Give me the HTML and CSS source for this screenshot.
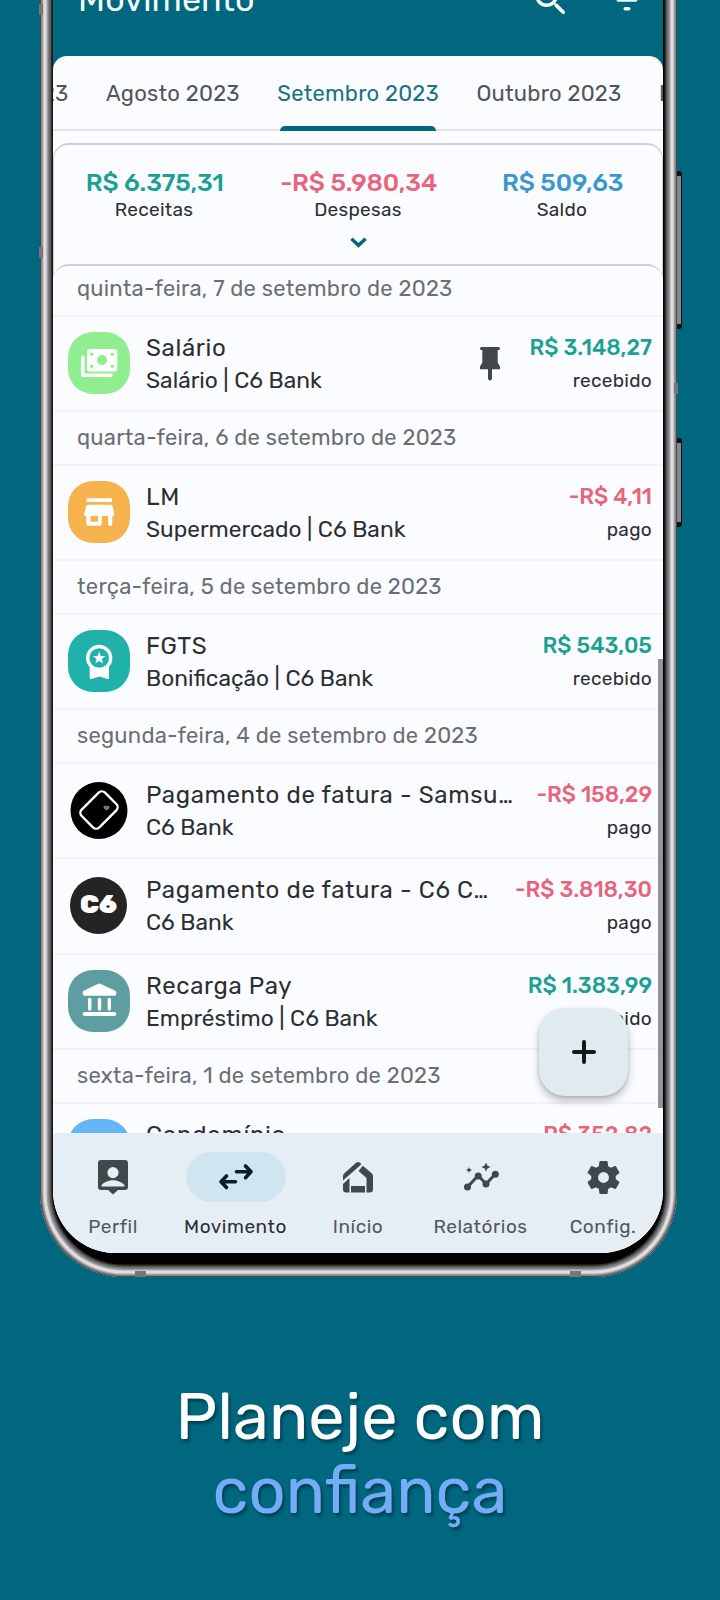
FILE: index.html
```html
<!DOCTYPE html>
<html lang="pt-BR">
<head>
    <meta charset="UTF-8">
    <meta name="viewport" content="width=device-width, initial-scale=1.0">
    <title>Movimento</title>
    <link rel="stylesheet" href="styles.css">
</head>
<body>
    <div class="phone">
        <span class="side-button volume"></span>
        <span class="side-button power"></span>
        <span class="antenna left-top"></span>
        <span class="antenna left-mid"></span>
        <span class="antenna right-mid"></span>
        <span class="antenna bottom-left"></span>
        <span class="antenna bottom-right"></span>
        <div class="screen">
            <header class="app-bar">
                <h1>Movimento</h1>
                <svg class="bar-icon" viewBox="0 0 24 24"><path d="M15.5 14h-.79l-.28-.27A6.47 6.47 0 0 0 16 9.500a6.500 6.500 0 1 0-6.500 6.500c1.610 0 3.090-.59 4.230-1.570l.27.28v.79l4.250 4.250c.41.41 1.080.41 1.490 0s.41-1.080 0-1.490L15.500 14zm-6 0a4.500 4.500 0 1 1 0-9 4.500 4.500 0 0 1 0 9z"/></svg>
                <svg class="bar-icon" viewBox="0 0 24 24"><path d="M4 6h16v2H4zM7 11h10a1 1 0 0 1 0 2H7a1 1 0 0 1 0-2zM11 16h2a1 1 0 0 1 0 2h-2a1 1 0 0 1 0-2z"/></svg>
            </header>
            <nav class="tabs">
                <span class="tab previous">Julho 2023</span>
                <span class="tab">Agosto 2023</span>
                <span class="tab active">Setembro 2023</span>
                <span class="tab">Outubro 2023</span>
                <span class="tab">Novembro 2023</span>
            </nav>
            <section class="summary">
                <div class="totals">
                    <div class="total"><b class="income">R$ 6.375,31</b><span>Receitas</span></div>
                    <div class="total"><b class="expense">-R$ 5.980,34</b><span>Despesas</span></div>
                    <div class="total"><b class="balance">R$ 509,63</b><span>Saldo</span></div>
                </div>
                <svg class="chevron" viewBox="0 0 16 10"><path d="M1.300 1.500 8 7.700l6.700-6.200"/></svg>
            </section>
            <main class="list">
                <h2 class="date first">quinta-feira, 7 de setembro de 2023</h2>
                <div class="entry">
                    <svg class="tile green" viewBox="0 0 62 62">
                        <rect class="fill" x="19" y="17" width="30.300" height="22.600" rx="3"/>
                        <path class="line" d="M14.800 25v18.300h28.200"/>
                        <g class="hole"><circle cx="34" cy="28" r="5"/><circle cx="23.700" cy="22.300" r="1.700"/><circle cx="44.300" cy="22.300" r="1.700"/><circle cx="23.700" cy="34.300" r="1.700"/><circle cx="44.300" cy="34.300" r="1.700"/></g>
                    </svg>
                    <div class="info"><p class="name">Salário</p><p class="sub">Salário | C6 Bank</p></div>
                    <svg class="pin" viewBox="0 0 22 34"><path d="M2.500 0h17a1 1 0 0 1 0 3h-.8v12.500c0 1.500 2.300 2.500 2.300 4.500v2.300H13V32l-2 2-2-2v-9.700H1V20c0-2 2.300-3 2.300-4.500V3h-.8a1 1 0 0 1 0-3z"/></svg>
                    <div class="value"><b class="income">R$ 3.148,27</b><span>recebido</span></div>
                </div>
                <h2 class="date">quarta-feira, 6 de setembro de 2023</h2>
                <div class="entry">
                    <svg class="tile orange" viewBox="0 0 62 62">
                        <rect class="fill" x="18.300" y="17.300" width="26" height="3.700" rx="1.500"/>
                        <path class="fill" fill-rule="evenodd" d="M20 23.700h22.600q1.700 0 2 1.500l1.700 8q.3 1.700-1.300 1.700h-.7v8q0 2-2.200 2-2 0-2-2v-8h-6.400v7.800q0 2-2 2H20.300q-2 0-2-2v-7.800h-.7q-1.600 0-1.300-1.700l1.700-8q.4-1.500 2-1.500zM22.600 35v5.800h7.500V35z"/>
                    </svg>
                    <div class="info"><p class="name">LM</p><p class="sub">Supermercado | C6 Bank</p></div>
                    <div class="value"><b class="expense">-R$ 4,11</b><span>pago</span></div>
                </div>
                <h2 class="date">terça-feira, 5 de setembro de 2023</h2>
                <div class="entry">
                    <svg class="tile teal" viewBox="0 0 62 62">
                        <path class="fill" d="M21.700 36q9.300 6 19.300 0v12q0 1.500-1.500 1L31.300 46.500 23.200 49q-1.500.5-1.500-1z"/>
                        <circle class="hole" cx="31.200" cy="28" r="11"/>
                        <circle class="line" cx="31.200" cy="28" r="11.500"/>
                        <path class="fill" d="m31.200 21.500 1.600 4.500 4.700.1-3.700 2.900 1.300 4.600-3.900-2.700-3.900 2.700 1.300-4.600-3.700-2.900 4.700-.1z"/>
                    </svg>
                    <div class="info"><p class="name">FGTS</p><p class="sub">Bonificação | C6 Bank</p></div>
                    <div class="value"><b class="income">R$ 543,05</b><span>recebido</span></div>
                </div>
                <h2 class="date">segunda-feira, 4 de setembro de 2023</h2>
                <div class="entry">
                    <svg class="tile" viewBox="0 0 62 62">
                        <circle cx="31" cy="31.500" r="28.500"/>
                        <rect class="card" x="18.500" y="14.500" width="25" height="33" rx="4.500" transform="rotate(45 31 31)"/>
                        <path class="heart" d="M38.500 31.500q-4-2.500-2.700-4.500 1.700-1.300 2.900.3 1.700-1.300 2.800.3.600 2-3 3.900z"/>
                    </svg>
                    <div class="info"><p class="name">Pagamento de fatura - Samsung</p><p class="sub">C6 Bank</p></div>
                    <div class="value"><b class="expense">-R$ 158,29</b><span>pago</span></div>
                </div>
                <div class="entry">
                    <div class="tile bank-logo">C6</div>
                    <div class="info"><p class="name">Pagamento de fatura - C6 Carbon</p><p class="sub">C6 Bank</p></div>
                    <div class="value"><b class="expense">-R$ 3.818,30</b><span>pago</span></div>
                </div>
                <div class="entry">
                    <svg class="tile cadet" viewBox="0 0 62 62">
                        <path class="fill" d="M30.300 13.700q1-.6 2 0l15 7q1 .5 1 1.700v1.300q0 2-2 2H16.700q-2 0-2-2v-1.300q0-1.200 1-1.700z"/>
                        <rect class="fill" x="20" y="27.700" width="3.400" height="13" rx="1.700"/>
                        <rect class="fill" x="29.800" y="27.700" width="3.400" height="13" rx="1.700"/>
                        <rect class="fill" x="39.600" y="27.700" width="3.400" height="13" rx="1.700"/>
                        <rect class="fill" x="14.700" y="42" width="33.600" height="4" rx="2"/>
                    </svg>
                    <div class="info"><p class="name">Recarga Pay</p><p class="sub">Empréstimo | C6 Bank</p></div>
                    <div class="value"><b class="income">R$ 1.383,99</b><span>recebido</span></div>
                </div>
                <h2 class="date">sexta-feira, 1 de setembro de 2023</h2>
                <div class="entry">
                    <svg class="tile blue" viewBox="0 0 62 62"></svg>
                    <div class="info"><p class="name">Condomínio</p></div>
                    <div class="value"><b class="expense">R$ 352,82</b></div>
                </div>
            </main>
            <span class="scrollbar"></span>
            <button class="fab"><svg viewBox="0 0 24 24"><path d="M12 2v20M2 12h20"/></svg></button>
            <nav class="bottom-nav">
                <div class="nav-item">
                    <span class="nav-icon"><svg viewBox="0 0 36 36"><path fill-rule="evenodd" d="M6 1h24q3 0 3 3v24q0 3-3 3h-7l-5 4.500-5-4.500H6q-3 0-3-3V4q0-3 3-3zm12 7a5.600 5.600 0 1 0 0 11.200A5.600 5.600 0 0 0 18 8zM6.500 27.500h23v-1.200C27 23 21.500 21.300 18 21.300S9 23 6.500 26.300z"/></svg></span>
                    <span>Perfil</span>
                </div>
                <div class="nav-item active">
                    <span class="nav-icon"><svg viewBox="0 0 36 36"><path class="arrow" d="M18.500 12.800h14.500M27.500 7l5.500 5.800-5.500 5.900M17.500 22.700H3M8.500 17 3 22.700l5.500 5.800"/></svg></span>
                    <span>Movimento</span>
                </div>
                <div class="nav-item">
                    <span class="nav-icon"><svg viewBox="0 0 36 36"><path d="M15.800 4q2.200-1.800 4.400 0l1.300 1.200L3 21.500V17q0-1.500 1.200-2.500zM22.800 6.700 32 14.500q1 1 1 2.500v13.500q0 3-3 3h-3.500V19L18.500 12z"/><path d="M3 25 9.500 19v14.500H6q-3 0-3-3zM11 27h14v6.500H11z"/></svg></span>
                    <span>Início</span>
                </div>
                <div class="nav-item">
                    <span class="nav-icon"><svg viewBox="0 0 36 36"><path class="trend" d="m4.500 28 10.700-11.500L23 25l9.300-10"/><circle cx="4.500" cy="28" r="3.500"/><circle cx="15.200" cy="17" r="3.500"/><circle cx="23" cy="25" r="3.500"/><circle cx="32.300" cy="15.200" r="3.500"/><path d="m23 3.500 1.400 3.100 3.100 1.400-3.100 1.400L23 12.500l-1.400-3.100L18.500 8l3.100-1.400zM6 8l.9 2.100L9 11l-2.100.9L6 14l-.9-2.100L3 11l2.100-.9z"/></svg></span>
                    <span>Relatórios</span>
                </div>
                <div class="nav-item">
                    <span class="nav-icon"><svg class="gear" viewBox="0 0 24 24"><path d="M19.140 12.940c.04-.3.060-.61.060-.94 0-.32-.02-.64-.07-.94l2.030-1.580c.18-.14.23-.41.12-.61l-1.920-3.320c-.12-.22-.37-.29-.59-.22l-2.390.96c-.5-.38-1.030-.7-1.620-.94l-.36-2.540c-.04-.24-.24-.41-.48-.41h-3.840c-.24 0-.43.17-.47.41l-.36 2.540c-.59.24-1.130.57-1.620.94l-2.390-.96c-.22-.08-.47 0-.59.22L2.740 8.870c-.12.21-.08.47.12.61l2.030 1.580c-.05.3-.09.63-.09.94s.02.64.07.94l-2.030 1.580c-.18.14-.23.41-.12.61l1.920 3.320c.12.22.37.29.59.22l2.390-.96c.5.38 1.030.7 1.620.94l.36 2.540c.05.24.24.41.48.41h3.840c.24 0 .44-.17.47-.41l.36-2.540c.59-.24 1.130-.56 1.620-.94l2.390.96c.22.080.47 0 .59-.22l1.920-3.320c.12-.22.070-.47-.12-.61l-2.010-1.580zM12 15.200a3.200 3.200 0 1 1 0-6.400 3.200 3.200 0 0 1 0 6.400z"/></svg></span>
                    <span>Config.</span>
                </div>
            </nav>
        </div>
    </div>
    <p class="slogan">Planeje com<br><em>confiança</em></p>
</body>
</html>
```
FILE: styles.css
```css
* {
    box-sizing: border-box;
}
body {
    display: flow-root;
    margin: 0;
    height: 1600px;
    background: #00677f;
    font-family: Rubik, Roboto, sans-serif;
    color: #2c2f31;
    overflow: hidden;
}
h1, h2, p {
    margin: 0;
    font-weight: 400;
}
.phone {
    position: relative;
    width: 637px;
    height: 1297px;
    margin: -20px 0 0 40px;
    padding: 20px 14px 24px 13px;
    border-radius: 0 0 84px 84px;
    background: #000;
    box-shadow:
        inset 0 0 0 1px #4a4a4a,
        inset 0 0 0 2.5px #858585,
        inset 0 0 0 3.5px #b5b3b6,
        inset 0 0 0 6.5px #e0dce1,
        inset 0 0 0 8px #a0a0a0,
        inset 0 0 0 9.5px #7d7d7d,
        inset 0 0 0 11px #5a5a5a,
        inset 0 0 0 12.5px #2e2e2e;
}
.screen {
    position: relative;
    display: flex;
    flex-direction: column;
    height: 1253px;
    border-radius: 0 0 62px 62px;
    background: #fbfcff;
    overflow: hidden;
}
.side-button {
    position: absolute;
    right: -5px;
    width: 5px;
    border: solid #111;
    border-width: 5px 1px 5px 0;
    border-radius: 0 3px 3px 0;
    background: #888;
}
.volume {
    top: 191px;
    height: 158px;
}
.power {
    top: 458px;
    height: 89px;
}
.antenna {
    position: absolute;
    width: 4px;
    height: 11px;
    background: #777;
}
.left-top {
    left: -1px;
    top: 24px;
}
.left-mid {
    left: -1px;
    top: 267px;
}
.right-mid {
    right: -1px;
    top: 403px;
}
.bottom-left, .bottom-right {
    bottom: 0;
    width: 11px;
    height: 6px;
}
.bottom-left {
    left: 95px;
}
.bottom-right {
    right: 96px;
}

/* Top of the app */
.app-bar {
    display: flex;
    gap: 34px;
    flex-shrink: 0;
    height: 56px;
    padding: 0 15px 0 25px;
    background: #00677f;
    color: #f3fafc;
}
.app-bar h1 {
    flex: 1;
    margin-top: -20px;
    font-size: 34px;
    line-height: 40px;
    letter-spacing: 0.15px;
}
.bar-icon {
    width: 42px;
    height: 42px;
    margin-top: -21px;
    fill: #f3fafc;
}
.tabs {
    display: flex;
    flex-shrink: 0;
    gap: 37.5px;
    height: 75px;
    border-radius: 14px 14px 0 0;
    border-bottom: 2px solid #dfe4e8;
    background: #fbfcff;
    box-shadow: 0 -20px 0 #00677f;
    font-size: 22px;
    line-height: 75px;
    letter-spacing: 0.23px;
    color: #50555a;
    white-space: nowrap;
}
.tab.previous {
    display: flex;
    justify-content: flex-end;
    width: 15.5px;
}
.tab.active {
    position: relative;
    color: #1b7186;
}
.tab.active::after {
    content: "";
    position: absolute;
    left: 2.5px;
    right: 2.5px;
    bottom: -2px;
    height: 5px;
    border-radius: 5px 5px 0 0;
    background: #00677f;
}
.summary {
    height: 135px;
    flex-shrink: 0;
    margin-top: 12px;
    padding-top: 23px;
    border: 2px solid #cfd0d5;
    border-width: 2px 1px 0;
    border-radius: 16px 16px 0 0;
    text-align: center;
}
.totals {
    display: grid;
    grid-template-columns: repeat(3, 204px);
    justify-content: center;
}
.total b, .total span {
    display: block;
}
.total b {
    padding-left: 1.5px;
    font-size: 25px;
    font-weight: 500;
    line-height: 30px;
    letter-spacing: -0.1px;
}
.total span {
    font-size: 19px;
    line-height: 24px;
    letter-spacing: 0.3px;
}
.income {
    color: #1aa193;
}
.expense {
    color: #e9647a;
}
.balance {
    color: #3d98ca;
}
.chevron {
    width: 17px;
    height: 11px;
    margin-top: 15px;
    fill: none;
    stroke: #00677f;
    stroke-width: 3.2;
}

/* Entries */
.list {
    flex: 1;
    min-height: 0;
    margin-top: -14px;
    border: solid #cfd0d5;
    border-width: 2px 0 0;
    border-radius: 16px 16px 0 0;
    background: #fbfcff;
    overflow: hidden;
}
.date {
    height: 53.6px;
    padding-left: 24px;
    border-bottom: 2px solid #f1f3f6;
    font-size: 22px;
    line-height: 52px;
    letter-spacing: 0.23px;
    color: #6b6f72;
}
.date.first {
    height: 51px;
    line-height: 45px;
}
.entry {
    display: flex;
    align-items: flex-start;
    height: 95.4px;
    padding: 15px 11px 0 15px;
    border-bottom: 2px solid #f1f3f6;
}
.tile {
    flex-shrink: 0;
    width: 62px;
    height: 62px;
    border-radius: 25px;
}
.green { background: #90ee90; --tile: #90ee90; }
.orange { background: #f6b24d; --tile: #f6b24d; }
.teal { background: #20b2aa; --tile: #20b2aa; }
.cadet { background: #5f9ea0; --tile: #5f9ea0; }
.blue { background: #64b5f6; }
.fill {
    fill: #fff;
}
.hole {
    fill: var(--tile);
}
.line {
    fill: none;
    stroke: #fff;
    stroke-width: 3.4;
    stroke-linecap: round;
    stroke-linejoin: round;
}
.card {
    fill: none;
    stroke: #fff;
    stroke-width: 2.4;
}
.heart {
    fill: #777;
}
.bank-logo {
    width: 57px;
    height: 57px;
    margin: 3px 3px 2px 2px;
    border-radius: 50%;
    background: #242424;
    color: #fff;
    font-size: 26px;
    font-weight: 900;
    line-height: 56px;
    text-align: center;
}
.info {
    flex: 1;
    min-width: 0;
    margin-left: 16px;
}
.name, .sub {
    white-space: nowrap;
    overflow: hidden;
    text-overflow: ellipsis;
}
.name {
    font-size: 24px;
    line-height: 32px;
    letter-spacing: 0.63px;
}
.sub {
    margin-top: 1px;
    font-size: 22.7px;
    line-height: 32px;
}
.pin {
    width: 22px;
    height: 34px;
    margin: 15px 11px 0 0;
    fill: #40484c;
}
.value {
    margin-left: 18px;
    text-align: right;
}
.value b, .value span {
    display: block;
}
.value b {
    font-size: 22px;
    font-weight: 500;
    line-height: 31px;
}
.value span {
    font-size: 19px;
    line-height: 35px;
    letter-spacing: 0.3px;
}
.scrollbar {
    position: absolute;
    right: 0;
    top: 659px;
    width: 5px;
    height: 449px;
    background: #939499;
}
.fab {
    position: absolute;
    right: 35px;
    top: 1008px;
    width: 89px;
    height: 88px;
    padding: 0;
    border: 0;
    border-radius: 26px;
    background: #e0ebef;
    box-shadow: 0 5px 9px rgba(0, 0, 0, 0.25), 0 1px 3px rgba(0, 0, 0, 0.12);
}
.fab svg {
    display: block;
    width: 24px;
    height: 24px;
    margin: auto;
    stroke: #14191b;
    stroke-width: 4;
    stroke-linecap: round;
}

/* Bottom navigation */
.bottom-nav {
    display: grid;
    grid-template-columns: repeat(5, 122.5px);
    justify-content: center;
    flex-shrink: 0;
    height: 120px;
    padding-top: 19px;
    background: #e6eef5;
}
.nav-item {
    display: flex;
    flex-direction: column;
    align-items: center;
    gap: 11px;
    font-size: 19px;
    line-height: 27px;
    letter-spacing: 0.55px;
    color: #50585d;
}
.nav-item.active {
    color: #2a3033;
}
.nav-icon {
    display: flex;
    align-items: center;
    justify-content: center;
    width: 100px;
    height: 50px;
    border-radius: 25px;
}
.active .nav-icon {
    background: #cfe6f1;
}
.nav-icon svg {
    width: 36px;
    height: 36px;
    fill: #40484c;
}
.nav-icon .gear {
    width: 41px;
    height: 41px;
}
.arrow, .trend {
    fill: none;
    stroke: #40484c;
    stroke-width: 3;
}
.arrow {
    stroke: #071e26;
    stroke-width: 3.6;
    stroke-linecap: round;
    stroke-linejoin: round;
}
.slogan {
    margin-top: 103px;
    font-size: 65px;
    line-height: 74px;
    text-align: center;
    color: #fff;
    text-shadow: 2px 3px 3px rgba(0, 0, 0, 0.35);
}
.slogan em {
    font-style: normal;
    color: #74acf5;
}
```
